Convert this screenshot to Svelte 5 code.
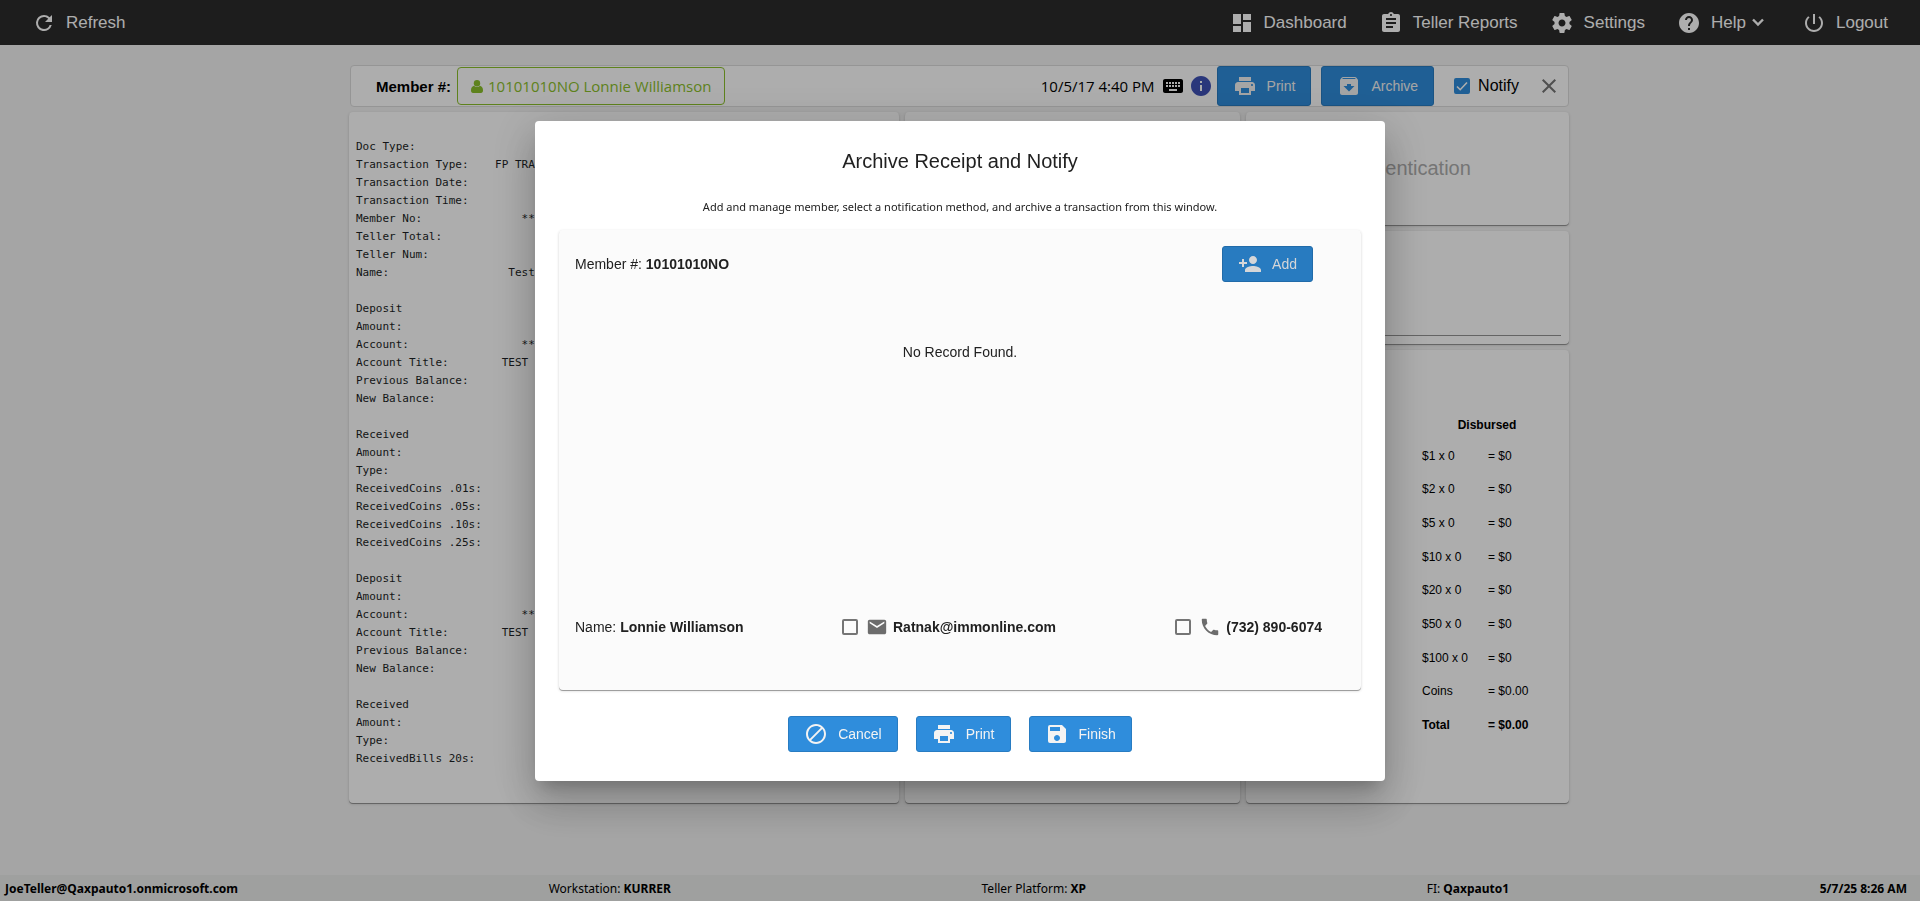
<script>
  const icons = {
    refresh: 'M17.65 6.35A7.958 7.958 0 0 0 12 4a8 8 0 1 0 7.73 10h-2.08A5.99 5.99 0 0 1 12 18a6 6 0 1 1 0-12c1.66 0 3.14.69 4.22 1.78L13 11h7V4l-2.35 2.35z',
    dashboard: 'M3 13h8V3H3v10zm0 8h8v-6H3v6zm10 0h8V11h-8v10zm0-18v6h8V3h-8z',
    reports: 'M19 3h-4.18C14.4 1.84 13.3 1 12 1c-1.3 0-2.4.84-2.82 2H5c-1.1 0-2 .9-2 2v14c0 1.1.9 2 2 2h14c1.1 0 2-.9 2-2V5c0-1.1-.9-2-2-2zm-7 0c.55 0 1 .45 1 1s-.45 1-1 1-1-.45-1-1 .45-1 1-1zm2 14H7v-2h7v2zm3-4H7v-2h10v2zm0-4H7V7h10v2z',
    settings: 'M19.43 12.98c.04-.32.07-.64.07-.98s-.03-.66-.07-.98l2.11-1.65c.19-.15.24-.42.12-.64l-2-3.46c-.12-.22-.39-.3-.61-.22l-2.49 1c-.52-.4-1.08-.73-1.69-.98l-.38-2.65A.488.488 0 0 0 14 2h-4c-.25 0-.46.18-.49.42l-.38 2.65c-.61.25-1.17.59-1.69.98l-2.49-1c-.23-.09-.49 0-.61.22l-2 3.46c-.13.22-.07.49.12.64l2.11 1.65c-.04.32-.07.65-.07.98s.03.66.07.98l-2.11 1.65c-.19.15-.24.42-.12.64l2 3.46c.12.22.39.3.61.22l2.49-1c.52.4 1.08.73 1.69.98l.38 2.65c.03.24.24.42.49.42h4c.25 0 .46-.18.49-.42l.38-2.65c.61-.25 1.17-.59 1.69-.98l2.49 1c.23.09.49 0 .61-.22l2-3.46c.12-.22.07-.49-.12-.64l-2.11-1.65zM12 15.5c-1.93 0-3.5-1.57-3.5-3.5s1.57-3.5 3.5-3.5 3.5 1.57 3.5 3.5-1.57 3.5-3.5 3.5z',
    help: 'M12 2C6.48 2 2 6.48 2 12s4.48 10 10 10 10-4.48 10-10S17.52 2 12 2zm1 17h-2v-2h2v2zm2.07-7.75l-.9.92C13.45 12.9 13 13.5 13 15h-2v-.5c0-1.1.45-2.1 1.17-2.83l1.24-1.26c.37-.36.59-.86.59-1.41 0-1.1-.9-2-2-2s-2 .9-2 2H8c0-2.21 1.79-4 4-4s4 1.79 4 4c0 .88-.36 1.68-.93 2.25z',
    logout: 'M13 3h-2v10h2V3zm4.83 2.17l-1.42 1.42C17.99 7.86 19 9.81 19 12c0 3.87-3.13 7-7 7s-7-3.13-7-7c0-2.19 1.01-4.14 2.58-5.42L6.17 5.17C4.23 6.82 3 9.26 3 12c0 4.97 4.03 9 9 9s9-4.03 9-9c0-2.74-1.23-5.18-3.17-6.83z',
    keyboard: 'M20 5H4c-1.1 0-1.99.9-1.99 2L2 17c0 1.1.9 2 2 2h16c1.1 0 2-.9 2-2V7c0-1.1-.9-2-2-2zm-9 3h2v2h-2V8zm0 3h2v2h-2v-2zM8 8h2v2H8V8zm0 3h2v2H8v-2zm-1 2H5v-2h2v2zm0-3H5V8h2v2zm9 7H8v-2h8v2zm0-4h-2v-2h2v2zm0-3h-2V8h2v2zm3 3h-2v-2h2v2zm0-3h-2V8h2v2z',
    info: 'M12 2C6.48 2 2 6.48 2 12s4.48 10 10 10 10-4.48 10-10S17.52 2 12 2zm1 15h-2v-6h2v6zm0-8h-2V7h2v2z',
    print: 'M19 8H5c-1.66 0-3 1.34-3 3v6h4v4h12v-4h4v-6c0-1.66-1.34-3-3-3zm-3 11H8v-5h8v5zm3-7c-.55 0-1-.45-1-1s.45-1 1-1 1 .45 1 1-.45 1-1 1zm-1-9H6v4h12V3z',
    archive: 'M20.54 5.23l-1.39-1.68C18.88 3.21 18.47 3 18 3H6c-.47 0-.88.21-1.16.55L3.46 5.23C3.17 5.57 3 6.02 3 6.5V19c0 1.1.9 2 2 2h14c1.1 0 2-.9 2-2V6.5c0-.48-.17-.93-.46-1.27zM12 17.5L6.5 12H10v-2h4v2h3.5L12 17.5zM5.12 5l.81-1h12l.94 1H5.12z',
    close: 'M19 6.41L17.59 5 12 10.59 6.41 5 5 6.41 10.59 12 5 17.59 6.41 19 12 13.41 17.59 19 19 17.59 13.41 12z',
    add: 'M15 12c2.21 0 4-1.79 4-4s-1.79-4-4-4-4 1.79-4 4 1.79 4 4 4zm-9-2V7H4v3H1v2h3v3h2v-3h3v-2H6zm9 4c-2.67 0-8 1.34-8 4v2h16v-2c0-2.66-5.33-4-8-4z',
    mail: 'M20 4H4c-1.1 0-1.99.9-1.99 2L2 18c0 1.1.9 2 2 2h16c1.1 0 2-.9 2-2V6c0-1.1-.9-2-2-2zm0 4l-8 5-8-5V6l8 5 8-5v2z',
    phone: 'M6.62 10.79c1.44 2.83 3.76 5.14 6.59 6.59l2.2-2.2c.27-.27.67-.36 1.02-.24 1.12.37 2.33.57 3.57.57.55 0 1 .45 1 1V20c0 .55-.45 1-1 1-9.39 0-17-7.61-17-17 0-.55.45-1 1-1h3.5c.55 0 1 .45 1 1 0 1.25.2 2.45.57 3.57.11.35.03.74-.25 1.02l-2.2 2.2z',
    cancel: 'M12 2C6.5 2 2 6.5 2 12s4.5 10 10 10 10-4.5 10-10S17.5 2 12 2zm-8 10c0-4.4 3.6-8 8-8 1.8 0 3.5.6 4.9 1.7L5.7 16.9C4.6 15.5 4 13.8 4 12zm8 8c-1.8 0-3.5-.6-4.9-1.7L18.3 7.1C19.4 8.5 20 10.2 20 12c0 4.4-3.6 8-8 8z',
    save: 'M17 3H5a2 2 0 0 0-2 2v14a2 2 0 0 0 2 2h14c1.1 0 2-.9 2-2V7l-4-4zm-5 16c-1.66 0-3-1.34-3-3s1.34-3 3-3 3 1.34 3 3-1.34 3-3 3zm3-10H5V5h10v4z'
  };

  const nav = [
    { icon: 'dashboard', label: 'Dashboard' },
    { icon: 'reports', label: 'Teller Reports' },
    { icon: 'settings', label: 'Settings' },
    { icon: 'help', label: 'Help', menu: true },
    { icon: 'logout', label: 'Logout' }
  ];

  const deposit = [
    'Deposit',
    'Amount:',
    'Account:                 **',
    'Account Title:        TEST',
    'Previous Balance:',
    'New Balance:',
    ''
  ];

  const receipt = [
    'Doc Type:',
    'Transaction Type:    FP TRA',
    'Transaction Date:',
    'Transaction Time:',
    'Member No:               **',
    'Teller Total:',
    'Teller Num:',
    'Name:                  Test',
    '',
    ...deposit,
    'Received',
    'Amount:',
    'Type:',
    'ReceivedCoins .01s:',
    'ReceivedCoins .05s:',
    'ReceivedCoins .10s:',
    'ReceivedCoins .25s:',
    '',
    ...deposit,
    'Received',
    'Amount:',
    'Type:',
    'ReceivedBills 20s:'
  ].join('\n');

  const bills = ['$1 x 0', '$2 x 0', '$5 x 0', '$10 x 0', '$20 x 0', '$50 x 0', '$100 x 0'];

  let notify = $state(true);
  let byEmail = $state(false);
  let byPhone = $state(false);
</script>

{#snippet icon(name, size = 24)}
  <svg class="icon" width={size} height={size} viewBox="0 0 24 24" aria-hidden="true"><path d={icons[name]} /></svg>
{/snippet}

<div class="page">
  <header class="topbar">
    <button class="nav-item">{@render icon('refresh')}<span>Refresh</span></button>
    <nav>
      {#each nav as item}
        <button class="nav-item" class:menu={item.menu}>
          {@render icon(item.icon)}
          <span>{item.label}</span>
          {#if item.menu}
            <svg class="chevron" width="12" height="9" viewBox="0 0 12 9" aria-hidden="true"><path d="M1 1.5l5 5 5-5" /></svg>
          {/if}
        </button>
      {/each}
    </nav>
  </header>

  <main>
    <section class="toolbar">
      <strong>Member #:</strong>
      <button class="chip">
        <svg class="icon" width="12" height="13" viewBox="0 0 12 13" aria-hidden="true"><circle cx="6" cy="3.2" r="3.2" /><path d="M3 5.8C.8 6.300 0 8.300 0 10.500 0 12 .7 13 2 13h8c1.300 0 2-1 2-2.500 0-2.200-.8-4.200-3-4.700a4.200 4.200 0 0 1-6 0z" /></svg>
        10101010NO Lonnie Williamson
      </button>
      <span class="stamp">10/5/17 4:40 PM</span>
      <span class="keys">{@render icon('keyboard')}</span>
      <span class="info">{@render icon('info')}</span>
      <button class="btn tall">{@render icon('print')}Print</button>
      <button class="btn tall archive">{@render icon('archive')}Archive</button>
      <label class="notify"><input type="checkbox" class="box" bind:checked={notify} />Notify</label>
      <button class="close" aria-label="Close">{@render icon('close', 24)}</button>
    </section>

    <section class="cards">
      <article class="card receipt"><pre>{receipt}</pre></article>
      <article class="card"></article>
      <div class="side">
        <article class="card auth"><h2>Authentication</h2></article>
        <article class="card note"><div class="rule"></div></article>
        <article class="card cash">
          <table>
            <thead><tr><th colspan="2">Disbursed</th></tr></thead>
            <tbody>
              {#each bills as bill}
                <tr><td>{bill}</td><td>= $0</td></tr>
              {/each}
              <tr><td>Coins</td><td>= $0.00</td></tr>
              <tr class="total"><td>Total</td><td>= $0.00</td></tr>
            </tbody>
          </table>
        </article>
      </div>
    </section>
  </main>

  <footer>
    <b>JoeTeller@Qaxpauto1.onmicrosoft.com</b>
    <span>Workstation: <b>KURRER</b></span>
    <span class="platform">Teller Platform: <b>XP</b></span>
    <span>FI: <b>Qaxpauto1</b></span>
    <b>5/7/25 8:26 AM</b>
  </footer>
</div>

<div class="backdrop">
  <div class="dialog" role="dialog" aria-modal="true" aria-labelledby="dialog-title">
    <h1 id="dialog-title">Archive Receipt and Notify</h1>
    <p class="hint">Add and manage member, select a notification method, and archive a transaction from this window.</p>
    <section class="panel">
      <div class="panel-head">
        <span>Member #: <b>10101010NO</b></span>
        <button class="btn pressed">{@render icon('add')}Add</button>
      </div>
      <p class="empty">No Record Found.</p>
      <div class="contact">
        <span>Name: <b>Lonnie Williamson</b></span>
        <label><input type="checkbox" class="box" bind:checked={byEmail} />{@render icon('mail', 22)}<b>Ratnak@immonline.com</b></label>
        <label><input type="checkbox" class="box" bind:checked={byPhone} />{@render icon('phone', 22)}<b>(732) 890-6074</b></label>
      </div>
    </section>
    <div class="actions">
      <button class="btn">{@render icon('cancel')}Cancel</button>
      <button class="btn">{@render icon('print')}Print</button>
      <button class="btn">{@render icon('save')}Finish</button>
    </div>
  </div>
</div>

<style>
  :global(body) {
    margin: 0;
  }

  .page,
  .backdrop {
    font-family: 'Liberation Sans', Arial, sans-serif;
    box-sizing: border-box;
  }

  .page {
    display: flex;
    flex-direction: column;
    min-height: 100vh;
    background: #f3f3f3;
    color: #000;
  }

  button {
    font-family: inherit;
    margin: 0;
    padding: 0;
    border: 0;
    background: none;
    color: inherit;
  }

  .icon {
    fill: currentColor;
    flex: none;
    display: block;
  }

  .topbar {
    display: flex;
    justify-content: space-between;
    align-items: center;
    height: 45px;
    padding: 0 32px;
    background: #2c2c2c;
    color: #fff;
  }

  nav {
    display: flex;
    gap: 32px;
  }

  .nav-item {
    display: flex;
    align-items: center;
    gap: 10px;
    font-size: 17px;
    line-height: 24px;
  }

  .menu {
    padding-right: 6px;
  }

  .chevron {
    fill: none;
    stroke: currentColor;
    stroke-width: 2.4;
    margin-left: -4px;
  }

  main {
    flex: 1;
    width: 100%;
    max-width: 1222px;
    margin: 0 auto;
    padding: 20px 2px 0 0;
    box-sizing: border-box;
  }

  .toolbar {
    display: flex;
    align-items: center;
    height: 42px;
    box-sizing: border-box;
    margin-left: 1px;
    padding: 0 7px 0 25px;
    border: 1px solid #dcdcdc;
    border-radius: 4px;
    background: #fff;
    font-size: 16px;
  }

  .toolbar strong {
    font-size: 15px;
  }

  .chip {
    display: flex;
    align-items: center;
    gap: 5px;
    height: 38px;
    box-sizing: border-box;
    margin-left: 6px;
    padding: 0 13px;
    border: 1px solid #8bc02b;
    border-radius: 4px;
    color: #8bc02b;
    font-family: 'Open Sans', 'Noto Sans', sans-serif;
    font-size: 15px;
  }

  .stamp {
    margin-left: auto;
    font-family: 'Open Sans', 'Noto Sans', sans-serif;
    font-size: 15px;
  }

  .keys {
    margin-left: 6px;
  }

  .info {
    margin: 0 4px;
    color: #3f51b5;
  }

  .btn {
    display: flex;
    align-items: center;
    gap: 10px;
    height: 36px;
    box-sizing: border-box;
    padding: 0 15px;
    border: 1px solid #287cc2;
    border-radius: 3px;
    background: #2f8ddc;
    color: #f3f3f3;
    font-size: 14px;
  }

  .btn.tall {
    height: 40px;
  }

  .btn.pressed {
    background: #287bc0;
    border-color: #216ba9;
    color: #d5d6d8;
  }

  .archive {
    margin-left: 10px;
  }

  .notify {
    display: flex;
    align-items: center;
    gap: 8px;
    margin-left: 20px;
  }

  .box {
    appearance: none;
    flex: none;
    box-sizing: border-box;
    width: 16px;
    height: 16px;
    margin: 0;
    border: 2px solid #757575;
    border-radius: 2px;
  }

  .box:checked {
    border-color: #2f8ddc;
    background: #2f8ddc url("data:image/svg+xml,%3Csvg xmlns='http://www.w3.org/2000/svg' viewBox='0 0 12 12'%3E%3Cpath d='M1 6.500l3.200 3.200L11 2.500' fill='none' stroke='white' stroke-width='1.600'/%3E%3C/svg%3E") center / 12px no-repeat;
  }

  .close {
    margin-left: 18px;
    color: #757575;
  }

  .cards {
    display: grid;
    grid-template-columns: 550fr 335fr 323fr;
    gap: 6px;
    margin-top: 5px;
  }

  .card,
  .panel {
    border-radius: 4px;
    box-shadow: 0 1px 0 rgba(0, 0, 0, 0.3), 0 1px 3px rgba(0, 0, 0, 0.18);
  }

  .card {
    background: #fff;
    box-sizing: border-box;
  }

  .receipt {
    padding: 26px 6px 35px 7px;
  }

  pre {
    margin: 0;
    font-family: 'DejaVu Sans Mono', monospace;
    font-size: 11px;
    line-height: 18px;
    color: #1c1f26;
  }

  .side {
    display: grid;
    grid-template-rows: 113px 113px 1fr;
    gap: 6px;
  }

  .auth h2 {
    margin: 0;
    padding-top: 44px;
    text-align: center;
    font-size: 20px;
    line-height: 24px;
    font-weight: 400;
    color: #adadad;
  }

  .note {
    display: flex;
    align-items: flex-end;
    padding: 8px;
  }

  .rule {
    flex: 1;
    border-bottom: 1px solid #949494;
  }

  .cash {
    display: flex;
    justify-content: flex-end;
    align-items: flex-start;
    padding: 61px 15px 0 0;
  }

  table {
    border-collapse: collapse;
    width: 132px;
    height: 331px;
    font-size: 12px;
  }

  th {
    height: 28px;
    padding: 0 2px 0 0;
  }

  td {
    padding: 0;
  }

  td:first-child {
    width: 66px;
  }

  .total {
    font-weight: 700;
  }

  footer {
    display: flex;
    justify-content: space-between;
    align-items: center;
    height: 26px;
    padding: 0 13px 0 5px;
    background: #eaeceb;
    font-family: 'Noto Sans', 'Open Sans', sans-serif;
    font-size: 12px;
  }

  footer b {
    font-weight: 700;
  }

  .platform {
    padding-right: 30px;
  }

  .backdrop {
    position: fixed;
    inset: 0;
    display: flex;
    align-items: center;
    justify-content: center;
    background: rgba(0, 0, 0, 0.32);
    color: #212121;
    font-size: 14px;
  }

  .dialog {
    width: 850px;
    max-width: 100%;
    box-sizing: border-box;
    padding: 28px 24px 29px;
    border-radius: 4px;
    background: #fff;
    box-shadow: 0 11px 15px -7px rgba(0, 0, 0, 0.2), 0 24px 38px 3px rgba(0, 0, 0, 0.14), 0 9px 46px 8px rgba(0, 0, 0, 0.12);
  }

  h1 {
    margin: 0;
    text-align: center;
    font-size: 20px;
    line-height: 24px;
    font-weight: 400;
  }

  .hint {
    margin: 25px 0 14px;
    text-align: center;
    font-family: 'Noto Sans', 'Open Sans', sans-serif;
    font-size: 11px;
    line-height: 18px;
  }

  .panel {
    padding: 16px 39px 48px 16px;
    background: #fbfbfb;
  }

  .panel-head {
    display: flex;
    justify-content: space-between;
    align-items: center;
    padding-right: 9px;
  }

  .empty {
    margin: 60px -23px 250px 0;
    text-align: center;
    line-height: 20px;
  }

  .contact {
    display: grid;
    grid-template-columns: 267px 1fr auto;
    align-items: center;
    line-height: 30px;
  }

  .contact label {
    display: flex;
    align-items: center;
    gap: 8px;
  }

  .contact label :global(.icon) {
    margin-right: -3px;
    color: #6c6c6c;
  }

  .actions {
    display: flex;
    justify-content: center;
    gap: 18px;
    margin-top: 26px;
  }
</style>
